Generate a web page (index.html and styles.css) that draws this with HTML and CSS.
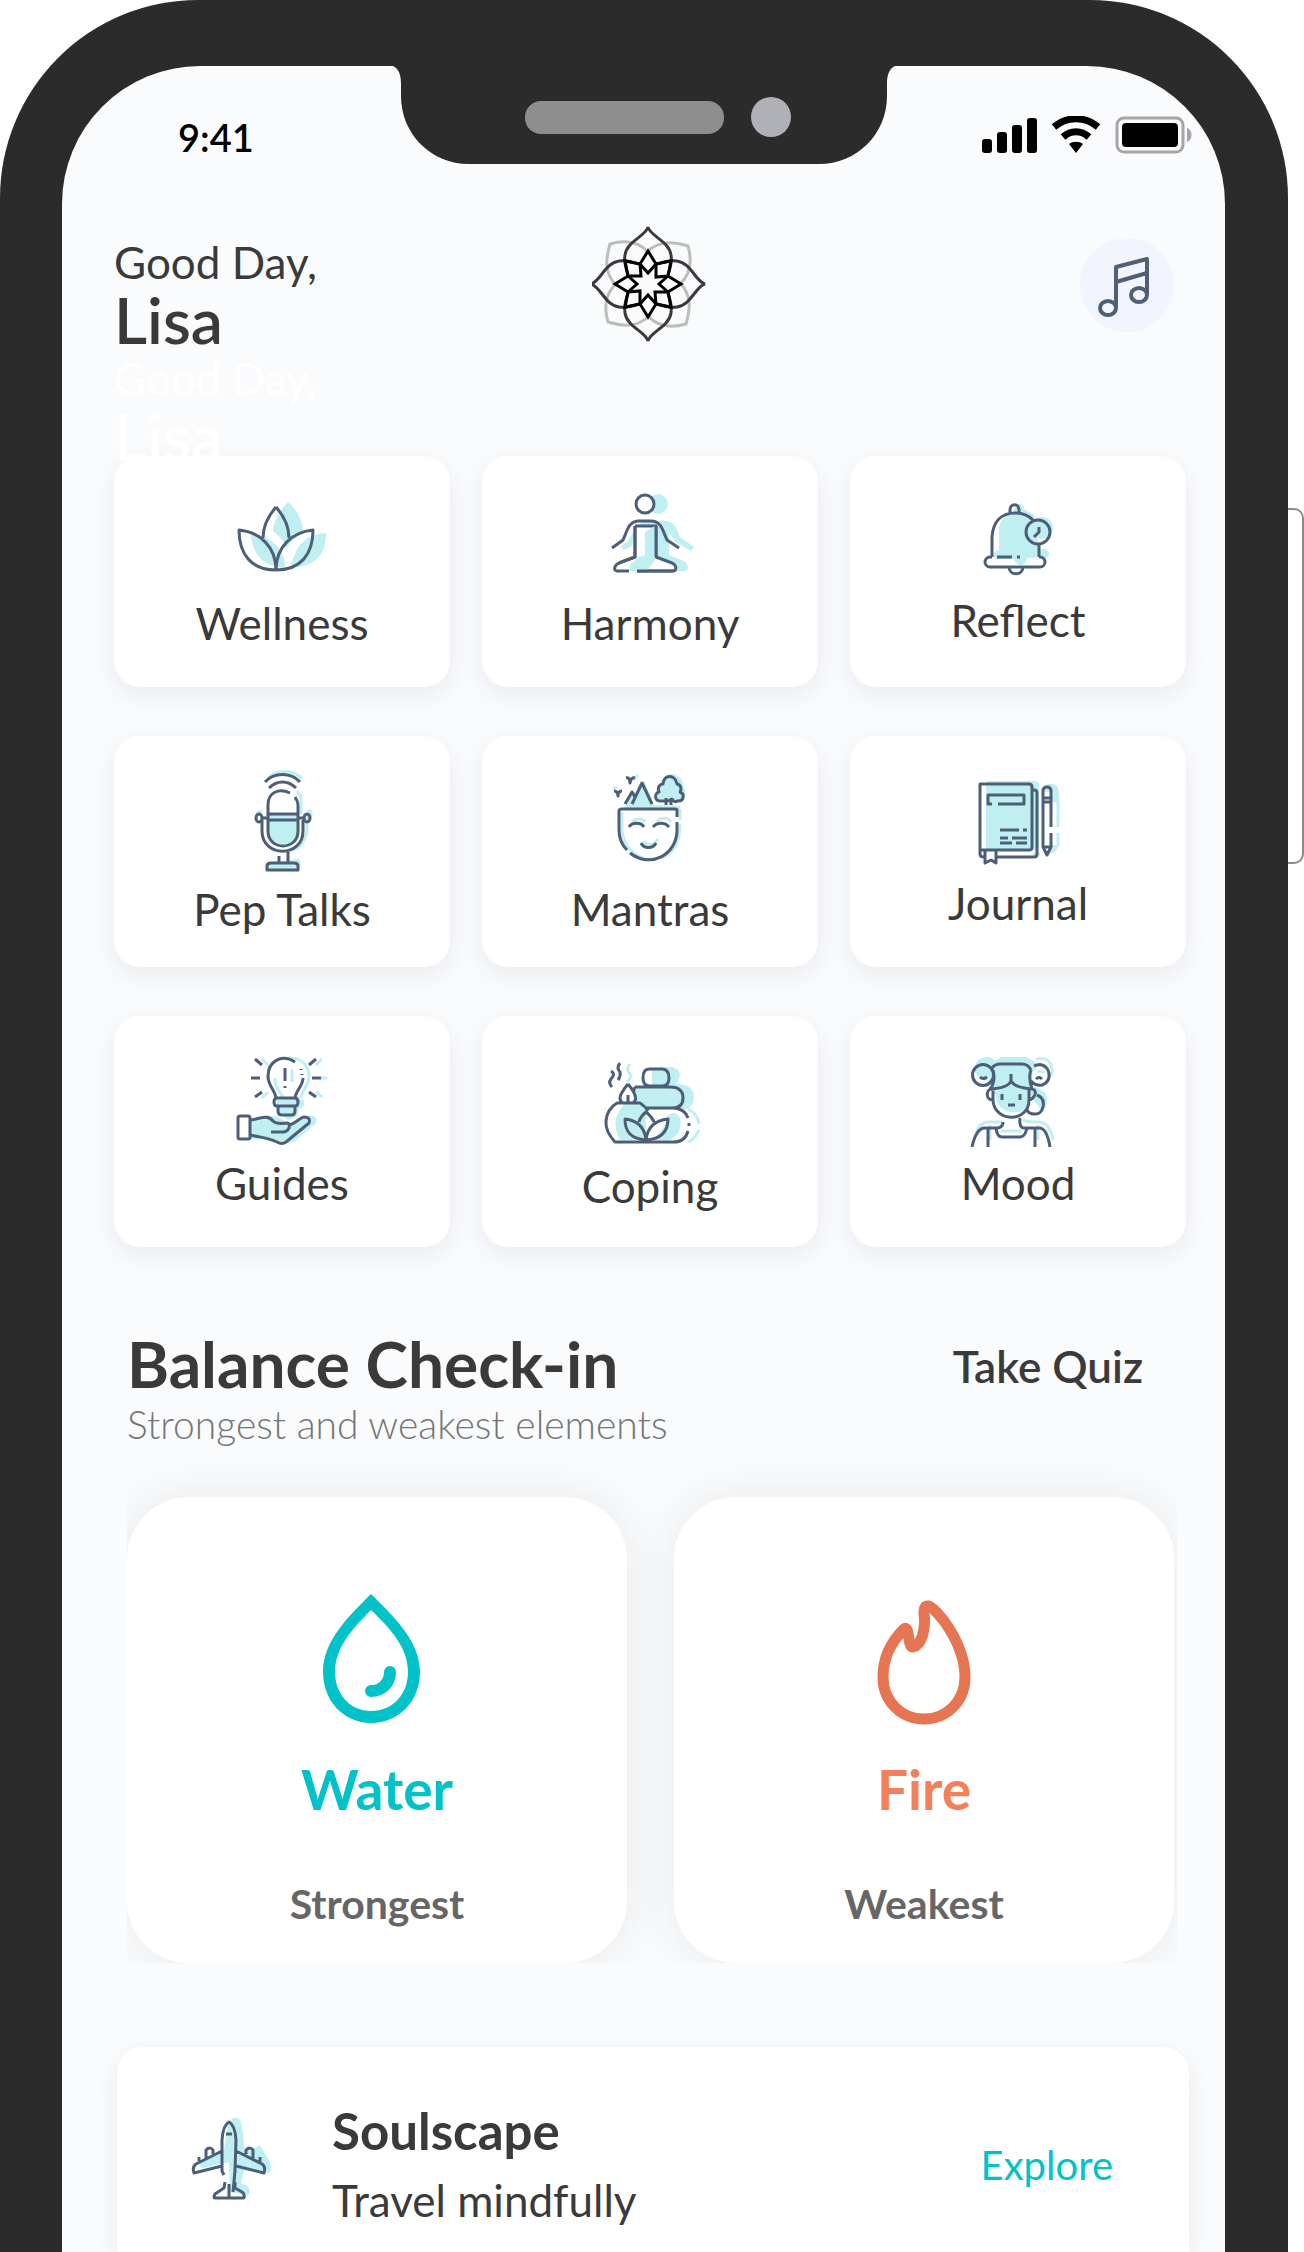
FILE: index.html
```html
<!DOCTYPE html>
<html lang="en">
<head>
<meta charset="utf-8">
<meta name="viewport" content="width=device-width, initial-scale=1">
<title>Good Day, Lisa</title>
<link rel="stylesheet" href="styles.css">
</head>
<body>
<div class="phone">
  <span class="side-button"></span>
  <svg class="notch" viewBox="0 0 502 99" aria-hidden="true">
    <path class="notch-body" d="M0 0C6 3 8 9 8 18V30C8 68 38 98 76 98H426C464 98 494 68 494 30V18C494 9 496 3 502 0Z"/>
    <rect class="speaker" x="132" y="35" width="199" height="33" rx="16"/>
    <circle class="camera" cx="378" cy="51" r="20"/>
  </svg>
  <div class="screen">
    <div class="status">
      <span class="clock">9:41</span>
      <svg class="status-icons" width="212" height="38" viewBox="0 0 212 38" aria-hidden="true">
        <rect x="1" y="23" width="10" height="14" rx="3"/><rect x="16" y="16" width="10" height="21" rx="3"/><rect x="31" y="9" width="10" height="28" rx="3"/><rect x="46" y="2" width="10" height="35" rx="3"/>
        <g class="wifi"><path d="M73 11C86 0 104 0 117 11"/><path d="M82 21C90 14 100 14 108 21"/></g>
        <path d="M88 28C92 25 98 25 102 28L95 37Z"/>
        <rect class="battery" x="136" y="2" width="66" height="34" rx="7"/><rect x="141" y="7" width="56" height="24" rx="4"/><path class="battery-tip" d="M206 12C212 14 212 24 206 26Z"/>
      </svg>
    </div>

    <header class="header">
      <div class="greetings">
        <p class="greeting">Good Day,</p>
        <h1 class="name">Lisa</h1>
        <p class="greeting faded" aria-hidden="true">Good Day,</p>
        <p class="name faded" aria-hidden="true">Lisa</p>
      </div>
      <svg class="logo" width="116" height="116" viewBox="-56 -58 116 116" aria-hidden="true">
        <defs>
          <path id="back-petal" d="M0 -32C-10 -43 -24 -44 -38 -40C-42 -26 -44 -12 -33 0"/>
          <path id="petal" d="M-20 -9C-23 -18 -24 -24 -23 -29C-21 -43 -2 -48 0 -57C2 -48 21 -43 23 -29C24 -24 23 -18 20 -9"/>
          <path id="star" d="M0 -33L8 -20L0 -11L-8 -20ZM-8 -20L-7 -8L-20 -8L-23 -23L-8 -20"/>
        </defs>
        <g class="logo-back"><use href="#back-petal"/><use href="#back-petal" transform="rotate(90)"/><use href="#back-petal" transform="rotate(180)"/><use href="#back-petal" transform="rotate(270)"/></g>
        <g class="logo-petals"><use href="#petal"/><use href="#petal" transform="rotate(90)"/><use href="#petal" transform="rotate(180)"/><use href="#petal" transform="rotate(270)"/></g>
        <g class="logo-star"><use href="#star"/><use href="#star" transform="rotate(90)"/><use href="#star" transform="rotate(180)"/><use href="#star" transform="rotate(270)"/></g>
      </svg>
      <button class="music" type="button" aria-label="Music">
        <svg width="94" height="94" viewBox="0 0 94 94" aria-hidden="true"><path d="M36 69V29L67 21V56M36 44L67 35"/><ellipse cx="28" cy="70" rx="8" ry="7"/><ellipse cx="59" cy="57" rx="8" ry="7"/></svg>
      </button>
    </header>

    <nav class="tiles">
      <a class="tile" href="#wellness">
        <svg class="icon" width="120" height="146" viewBox="0 0 120 146" aria-hidden="true">
          <g class="tint"><path d="M66 46C58 54 52 64 51 75C58 80 62 86 65 92C69 85 74 81 81 77C81 65 75 54 66 46Z"/><path d="M29 77C47 80 63 92 63 112C42 110 30 100 29 77Z"/><path d="M104 77C86 78 77 88 74 96L68 111C94 112 104 98 104 77Z"/></g>
          <g class="ink"><path d="M54 51C47 59 41 69 41 82M54 51C61 59 67 69 67 82"/><path d="M54 114C30 114 17 99 17 74C38 76 54 91 54 114C54 91 70 76 91 74C91 99 78 114 54 114Z"/></g>
        </svg>
        <span class="label">Wellness</span>
      </a>
      <a class="tile" href="#harmony">
        <svg class="icon" width="120" height="146" viewBox="0 0 120 146" aria-hidden="true">
          <g class="tint"><circle cx="68" cy="48" r="10"/><path d="M56 65H78C85 67 87 74 90 81L104 91L101 95L86 86L79 76V99C88 103 98 105 98 111C98 114 97 115 94 115H36C38 108 46 104 54 101V75C50 82 47 89 34 94L31 90C44 84 42 68 56 65Z"/></g>
          <circle class="ink paper" cx="55" cy="48" r="9"/>
          <g class="ink"><path class="paper" d="M45 70V101L29 107C23 110 24 115 27 115H39M45 70H66V101L82 107C88 110 86 115 83 115H47"/><path d="M22 92L33 84C37 76 38 65 49 65H61C72 65 73 76 77 84L89 92"/></g>
          <path class="tint" d="M55 76L65 70V104L57 115H41L46 102L55 99Z"/>
          <path class="ink" d="M47 115H83M45 70V101L29 107M66 70V101"/>
        </svg>
        <span class="label">Harmony</span>
      </a>
      <a class="tile" href="#reflect">
        <svg class="icon" width="120" height="143" viewBox="0 0 120 143" aria-hidden="true">
          <g class="tint"><path d="M41 99V72C42 65 47 59 54 57L58 50C60 46 66 48 66 53L76 59L82 98C82 103 70 101 69 103C67 111 58 111 56 103H40C33 103 35 95 41 94Z"/><circle cx="84" cy="72" r="11"/><circle cx="86" cy="98" r="5"/></g>
          <g class="ink"><path d="M52 57V54C52 47 61 47 61 54V57M34 101V81C35 66 43 57 57 57C64 57 70 59 75 64M81 89V101M34 101H32A5 5 0 0 0 32 111H82A5 5 0 0 0 82 101H81M51 111C51 120 65 120 65 111M39 101H54M59 101H62"/><circle cx="80" cy="76" r="12"/><path d="M81 71V76L76 81"/></g>
        </svg>
        <span class="label">Reflect</span>
      </a>
      <a class="tile" href="#pep-talks">
        <svg class="icon" width="120" height="152" viewBox="0 0 120 152" aria-hidden="true">
          <g class="tint"><path d="M46 78H76V95C76 113 46 113 46 95Z"/><path d="M46 127C48 125 70 126 76 122C80 125 79 132 76 134H46Z"/></g>
          <g class="tint-line"><path d="M45 43C54 33 72 33 80 43M79 78V64C79 60 77 57 75 55M85 80V94C84 104 78 112 70 114M85 76C89 72 91 80 86 82M40 76C36 74 35 78 36 79"/></g>
          <g class="ink"><path d="M43 46C52 36 69 36 78 46M47 52C55 44 66 44 74 52M68 57C57 52 46 56 46 69V95C46 115 76 115 76 95V69C76 66 75 64 73 61M46 78H76M46 84H76M40 84V95C40 122 81 122 81 95V84M40 82H45M76 82H81M66 116V127M57 120V127M45 134V130C45 128 47 127 49 127H72C75 127 76 128 76 130V134Z"/><ellipse cx="37" cy="82" rx="3" ry="4"/><ellipse cx="85" cy="82" rx="3" ry="4"/></g>
        </svg>
        <span class="label">Pep Talks</span>
      </a>
      <a class="tile" href="#mantras">
        <svg class="icon" width="120" height="152" viewBox="0 0 120 152" aria-hidden="true">
          <g class="tint"><path d="M35 71L43 55L47 58L54 44L64 69L90 70V74H31ZM66 60C65 56 68 52 70 52C70 44 74 38 82 38C89 38 94 45 93 50C97 54 96 62 93 65H70Z"/></g>
          <path class="tint-line" d="M90 73V84M90 88C90 108 82 118 73 121C50 129 34 113 32 95V76M42 86C46 82 52 82 55 86M67 85C72 81 78 81 81 86M43 44L48 39M23 53L27 51M54 105C58 111 65 109 68 103"/>
          <g class="ink"><path d="M87 81V74C87 73 86 73 85 73H32C30 73 29 74 29 75V94C29 103 32 109 37 114M40 117C60 133 87 119 87 94V86M39 91C42 86 51 86 54 91M63 91C67 86 75 86 79 91M51 107C54 113 63 113 66 107M42 68L52 47L62 68M35 68L42 56L45 61M36 42Q40 41 40 47Q41 41 45 42M24 55Q28 55 28 60Q28 55 32 55"/><path d="M72 65C64 66 64 57 69 56C67 51 70 48 73 48C74 38 85 38 87 48C91 49 92 53 90 56C95 58 94 66 87 65C84 67 83 64 82 63C79 66 76 65 72 65M76 62V69M81 62V69"/></g>
        </svg>
        <span class="label">Mantras</span>
      </a>
      <a class="tile" href="#journal">
        <svg class="icon" width="120" height="146" viewBox="0 0 120 146" aria-hidden="true">
          <g class="tint"><path d="M28 48Q28 45 31 45H76Q81 45 81 49V110Q81 114 76 114H28ZM85 58V52Q88 47 95 48Q101 49 101 57V66H94V58ZM94 109H101Q99 116 92 118Z"/></g>
          <path class="tint-line" d="M100 64V91M100 97V110M75 118H82"/>
          <path class="paper" d="M85 56H93V111H85Z"/>
          <g class="ink"><path d="M22 48H71Q74 48 74 51V111Q74 114 71 114H22ZM74 54H76Q79 54 79 57V118Q79 121 76 121H38M22 114V118Q22 121 26 121M34 68H30V59H66V68H40M42 94H61M65 94H69M42 102H50M54 102H69M42 107H54M58 107H69M27 114H38V127L33 124L27 127ZM93 91V55Q93 51 89 51Q85 51 85 55V111H93V97M85 62H93M85 66H93M85 111L89 119L93 111"/></g>
        </svg>
        <span class="label">Journal</span>
      </a>
      <a class="tile" href="#guides">
        <svg class="icon" width="120" height="146" viewBox="0 0 120 146" aria-hidden="true">
          <g class="tint"><path d="M73 82L82 84V90L77 93L75 101L66 104L58 98L54 84ZM28 104C40 99 50 98 58 102L67 108L83 101C90 98 98 101 93 108L72 126L60 128L43 123H28Z"/></g>
          <path class="tint-line" d="M53 62C53 74 60 77 61 82M67 42C80 41 88 51 87 62C86 70 80 74 79 82M70 53V66M40 43L46 49M40 82L46 76M100 43L94 49M94 76L100 81M99 62H105M44 62H48"/>
          <g class="ink"><path d="M73 46C59 37 46 46 46 60C46 70 53 74 54 82H73C74 74 81 70 81 62M80 59V58M79 54V53M55 82H73Q76 82 76 86Q76 90 73 90H55Q52 90 52 86Q52 82 55 82M56 91V95Q56 99 60 99H69Q73 99 73 95V91M63 52V65M63 70V72M29 62H38M90 62H99M33 43L40 49M33 81L40 76M94 43L87 49M87 76L94 81"/><path class="paper" d="M18 100H26Q28 100 28 102V121Q28 123 26 123H18Q16 123 16 121V102Q16 100 18 100Z"/><path d="M28 104C36 104 45 97 51 105C55 109 61 107 66 107Q68 108 67 112Q65 116 61 116H49M66 109C72 109 77 102 82 101Q89 101 87 107L64 126Q60 129 55 126C44 121 36 121 28 119"/></g>
        </svg>
        <span class="label">Guides</span>
      </a>
      <a class="tile" href="#coping">
        <svg class="icon" width="120" height="149" viewBox="0 0 120 149" aria-hidden="true">
          <g class="tint"><path d="M44 74Q46 70 62 71V56Q63 53 72 51H82Q90 52 90 60L87 68Q104 68 104 82Q103 91 96 93L57 93Q55 103 56 122L40 124H30Q20 105 32 91L36 86L45 84ZM76 102Q84 92 90 102Q93 117 80 124H61Q75 115 76 102Z"/></g>
          <path class="tint-line" d="M40 48Q35 53 40 58Q42 62 37 66M98 93Q108 98 109 108M109 114Q104 124 98 126"/>
          <g class="ink"><path d="M59 53H72Q79 53 79 62Q79 70 72 70H60Q53 70 53 62Q53 53 59 53ZM45 71H80Q93 71 93 82Q93 92 82 92H56M57 92H84Q95 93 98 102M99 107V110M98 115Q95 126 84 126H25Q15 115 16 105Q17 93 27 87H50Q55 90 58 95M38 68C29 79 28 84 33 87M38 68C47 79 47 84 43 87M38 79V86M45 71Q43 74 44 77M21 55Q26 58 21 63Q18 67 22 71M30 47Q26 52 30 56Q31 60 28 64"/><path d="M56 124C40 123 35 115 35 103Q54 105 56 124Q58 105 78 103C78 115 72 123 56 124M49 106Q50 101 56 96Q62 101 64 106"/></g>
        </svg>
        <span class="label">Coping</span>
      </a>
      <a class="tile" href="#mood">
        <svg class="icon" width="120" height="146" viewBox="0 0 120 146" aria-hidden="true">
          <g class="tint"><path d="M16 52Q19 41 29 41Q35 41 37 45L43 41H68Q76 44 80 49L74 58V71Q87 72 89 82Q90 92 83 94L73 80L68 92Q61 98 51 96Q38 91 38 80L30 65L35 59L27 65Q18 62 16 52Z"/></g>
          <path class="tint-line" d="M78 43Q92 40 94 53Q95 57 92 60M80 56Q83 54 86 57M65 104Q68 106 78 106Q92 105 95 124M44 106H31Q20 106 18 119M32 109V124M80 109V124M43 115H64"/>
          <g class="ink"><circle cx="25" cy="59" r="10.500"/><path d="M22 61Q25 64 29 61M76 50Q85 46 90 54Q94 65 84 69Q77 70 73 65M78 63Q81 60 84 63M34 52Q37 48 42 48H64Q70 48 73 54M35 54Q38 66 32 73M73 54Q70 61 74 73M53 58V65Q50 72 32 73M53 65Q57 72 75 73M35 73V84C36 107 71 107 71 84V73M34 73C28 73 27 84 35 84M75 73C80 76 76 83 71 84M79 79Q87 82 85 91Q83 99 76 98Q71 98 69 94M44 78V84M62 78V84M50 89H57M45 106Q45 111 40 112H26Q18 113 14 131M62 102Q61 112 66 112H81Q89 112 92 131M30 113V131M77 113V131M38 112Q39 121 44 121H62Q67 121 69 112"/></g>
        </svg>
        <span class="label">Mood</span>
      </a>
    </nav>

    <section class="balance">
      <div class="balance-head">
        <div>
          <h2 class="title">Balance Check-in</h2>
          <p class="subtitle">Strongest and weakest elements</p>
        </div>
        <a class="quiz" href="#quiz">Take Quiz</a>
      </div>
      <div class="elements">
        <article class="element water">
          <svg class="element-icon" width="110" height="132" viewBox="0 0 110 132" aria-hidden="true"><path class="fill" fill-rule="evenodd" d="M49 1C26 24 1 48 1 79C1 108 22 130 49 130C77 130 98 108 98 79C98 48 72 24 49 1ZM49 17C30 36 13 55 13 79C13 101 28 118 49 118C71 118 86 101 86 79C86 55 69 36 49 17Z"/><path class="line" d="M68 79C68 90 60 98 49 98"/></svg>
          <h3 class="element-name">Water</h3>
          <p class="rank">Strongest</p>
        </article>
        <article class="element fire">
          <svg class="element-icon" width="98" height="132" viewBox="0 0 98 132" aria-hidden="true"><path class="line" d="M53 13C61 14 90 50 90 84C90 108 72 126 49 126C26 126 8 108 8 84C8 63 18 47 29 36C35 31 32 54 38 54C47 52 51 35 49 20Q49 13 53 13Z"/></svg>
          <h3 class="element-name">Fire</h3>
          <p class="rank">Weakest</p>
        </article>
      </div>
    </section>

    <section class="promo">
      <svg class="promo-icon" width="100" height="110" viewBox="0 0 100 110" aria-hidden="true">
        <path class="tint" d="M46 26Q53 17 58 23Q62 34 62 53L73 51L78 48L85 60Q91 67 88 76L62 73L59 87Q70 87 67 98L48 95L47 65L20 71L17 67L42 53Z"/>
        <path class="ink" d="M42 78L40 74V43Q41 28 47 25Q53 28 54 43L53 74L51 95M40 54L14 67Q10 70 12 76L40 69M54 54L80 67Q84 70 82 76L54 69M44 37H50M24 61V53Q28 49 31 53V57M64 57V53Q68 49 71 53V61M17 64V60M78 65V60M43 85L42 91L33 97Q31 101 33 101H62Q63 97 60 95L53 91V85M47 87V100"/>
      </svg>
      <div class="promo-text">
        <h2 class="promo-title">Soulscape</h2>
        <p class="promo-copy">Travel mindfully</p>
      </div>
      <a class="explore" href="#explore">Explore</a>
    </section>
  </div>
</div>
</body>
</html>
```
FILE: styles.css
```css
* { box-sizing: border-box; }
html { background: #fff; }
body {
  margin: 0;
  color: #3a3a3a;
  font-family: Lato, "Liberation Sans", sans-serif;
}
h1, h2, h3, p { margin: 0; }
a { color: inherit; text-decoration: none; }
svg { display: block; }

.phone {
  position: relative;
  display: flex;
  min-height: 100vh;
  margin-right: 16px;
  padding: 66px 63px 0 62px;
  background: #2b2b2b;
  border-radius: 198px 198px 0 0;
}
.side-button {
  position: absolute;
  top: 508px;
  right: -16px;
  width: 16px;
  height: 356px;
  border: 2px solid #8b8b8b;
  border-left: 0;
  border-radius: 0 10px 10px 0;
}
.notch {
  position: absolute;
  top: 66px;
  left: 50%;
  width: 502px;
  margin-left: -251px;
}
.notch-body { fill: #2b2b2b; }
.speaker { fill: #8e8e8e; }
.camera { fill: #b0b1b7; }

.screen {
  display: flex;
  flex: 1;
  flex-direction: column;
  min-width: 0;
  padding: 0 39px 0 52px;
  background: #fafbfd;
  border-radius: 138px 138px 0 0;
  overflow: hidden;
}
.status {
  display: flex;
  align-items: center;
  justify-content: space-between;
  height: 138px;
  margin-right: -7px;
  padding-left: 64px;
}
.clock { padding-top: 4px; color: #000; font-size: 38px; font-weight: 600; line-height: 52px; }
.wifi { fill: none; stroke: #000; stroke-width: 7; }
.battery { fill: none; stroke: #a6a6a8; stroke-width: 3; }
.battery-tip { fill: #a6a6a8; }

.header {
  position: relative;
  z-index: 1;
  display: grid;
  grid-template-columns: 1fr auto 1fr;
  align-items: start;
  height: 252px;
  padding-top: 22px;
}
.greetings { padding-top: 10px; }
.greeting { font-size: 44px; line-height: 52px; }
.name { font-size: 64px; font-weight: 600; line-height: 64px; }
.faded { color: #fff; }
.logo use { fill: none; }
.logo-back { stroke: #bcbebe; stroke-width: 3; }
.logo-petals { stroke: #3a3a3c; stroke-width: 3; }
.logo-star { stroke: #000; stroke-width: 3; }
.music {
  justify-self: end;
  margin: 12px 12px 0 0;
  padding: 0;
  border: 0;
  border-radius: 50%;
  background: #f2f5fd;
}
.music svg { fill: none; stroke: #4d6078; stroke-width: 4; stroke-linejoin: round; }

.tiles {
  display: grid;
  grid-template-columns: repeat(3, 1fr);
  gap: 49px 32px;
}
.tile {
  display: flex;
  flex-direction: column;
  align-items: center;
  height: 231px;
  border-radius: 26px;
  background: #fff;
  box-shadow: 0 8px 24px rgba(40, 50, 60, .08);
}
.label { font-size: 44px; line-height: 42px; }
.ink { fill: none; stroke: #4d5f78; stroke-width: 3; stroke-linejoin: round; }
.paper { fill: #fff; }
.tint { fill: #bfeff0; }
.tint-line { fill: none; stroke: #bfeff0; stroke-width: 3; }

.balance { padding: 81px 9px 0 13px; }
.balance-head { display: flex; justify-content: space-between; align-items: start; }
.title { font-size: 64px; font-weight: 700; line-height: 72px; }
.subtitle { color: #757575; font-size: 39px; font-weight: 300; line-height: 48px; }
.quiz { padding: 12px 34px 0 0; font-size: 44px; font-weight: 600; line-height: 52px; }
.elements {
  display: grid;
  grid-template-columns: 1fr 1fr;
  gap: 47px;
  padding: 49px 3px 0 0;
  overflow: hidden;
}
.element {
  display: flex;
  flex-direction: column;
  align-items: center;
  height: 466px;
  padding-top: 96px;
  border-radius: 62px;
  background: #fff;
  box-shadow: 0 0 48px rgba(40, 50, 60, .09);
}
.element-name { padding-top: 28px; font-size: 55px; font-weight: 700; line-height: 72px; }
.rank { padding-top: 53px; color: #666; font-size: 41px; font-weight: 700; line-height: 52px; }
.water .element-name { color: #00c2c8; }
.water .fill { fill: #00c2c8; }
.water .line { fill: none; stroke: #00c2c8; stroke-width: 12; stroke-linecap: round; }
.fire .element-name { color: #f2805a; }
.fire .line { fill: none; stroke: #e67653; stroke-width: 11; stroke-linejoin: round; }

.promo {
  display: flex;
  flex: 1;
  align-items: start;
  margin: 84px -3px 0 3px;
  padding: 50px 76px 12px 65px;
  border-radius: 26px 26px 0 0;
  background: #fff;
  box-shadow: 0 8px 24px rgba(40, 50, 60, .08);
}
.promo-text { flex: 1; padding-left: 50px; }
.promo-title { font-size: 51px; font-weight: 700; line-height: 68px; }
.promo-copy { font-size: 44px; line-height: 70px; }
.explore { padding-top: 42px; color: #00c2c8; font-size: 40px; line-height: 52px; }
```
